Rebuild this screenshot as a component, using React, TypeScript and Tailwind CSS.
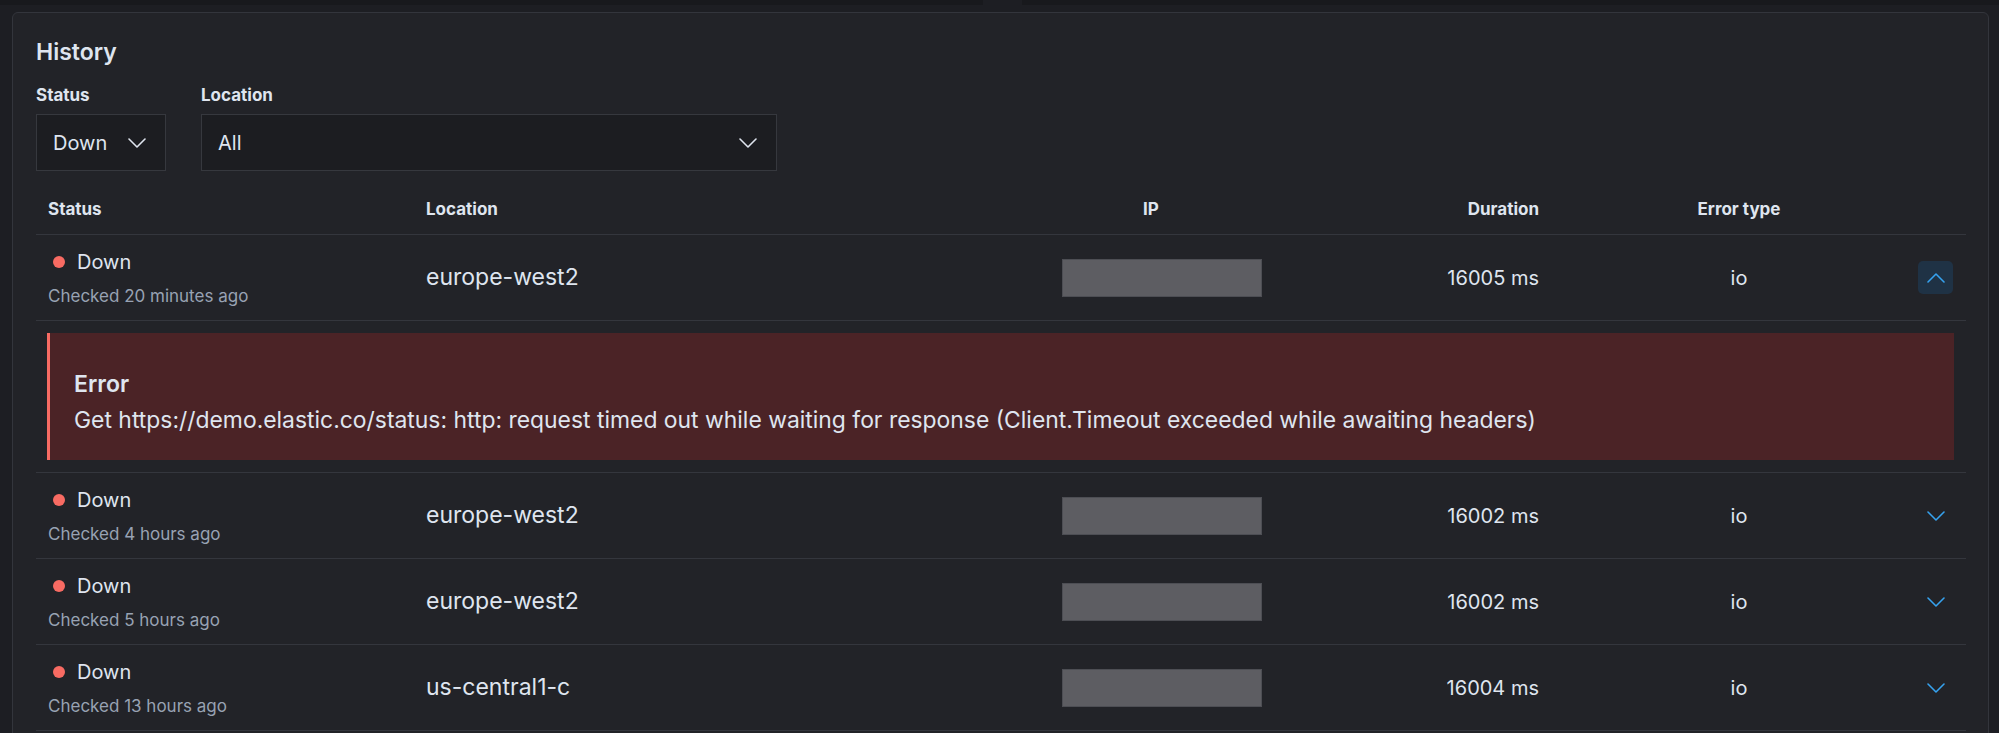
import React from "react";

type Row = {
  checked: string;
  location: string;
  duration: string;
  errorType: string;
  open?: boolean;
};

const rows: Row[] = [
  { checked: "Checked 20 minutes ago", location: "europe-west2", duration: "16005 ms", errorType: "io", open: true },
  { checked: "Checked 4 hours ago", location: "europe-west2", duration: "16002 ms", errorType: "io" },
  { checked: "Checked 5 hours ago", location: "europe-west2", duration: "16002 ms", errorType: "io" },
  { checked: "Checked 13 hours ago", location: "us-central1-c", duration: "16004 ms", errorType: "io" },
];

const cols = "grid grid-cols-[378px_586px_302px_258px_358px_47px]";

const Chevron = ({ up, color }: { up?: boolean; color: string }) => (
  <svg width="18" height="10" viewBox="0 0 18 10" fill="none">
    <path
      d={up ? "M1 9 L9 1 L17 9" : "M1 1 L9 9 L17 1"}
      stroke={color}
      strokeWidth="1.6"
      strokeLinecap="round"
      strokeLinejoin="round"
    />
  </svg>
);

const Select = ({ label, value, width }: { label: string; value: string; width: string }) => (
  <div className="flex flex-col">
    <div className="text-[17px] leading-[24px] font-bold text-[#dfe5ef]">{label}</div>
    <div className={`mt-[7px] h-[57px] ${width} flex items-center justify-between pl-[16px] pr-[19px] bg-[#1c1d21] border border-[#36383e]`}>
      <span className="text-[20px] text-[#dfe5ef]">{value}</span>
      <Chevron color="#dfe5ef" />
    </div>
  </div>
);

const HistoryRow = ({ row }: { row: Row }) => (
  <>
    <div className={`${cols} h-[86px] border-b border-[#34363d] items-center`}>
      <div className="pl-[12px] flex flex-col">
        <div className="flex items-center h-[24px]">
          <span className="w-[12px] h-[12px] rounded-full bg-[#f86b63] ml-[5px] mr-[12px]" />
          <span className="text-[20px] leading-[24px] text-[#dfe5ef]">Down</span>
        </div>
        <div className="mt-[12px] text-[17px] leading-[20px] text-[#98a2b3]">{row.checked}</div>
      </div>
      <div className="pl-[12px] text-[23px] text-[#dfe5ef]">{row.location}</div>
      <div className="pl-[62px]">
        <div className="w-[200px] h-[38px] bg-[#5d5d62] border border-[#4d4e54]" />
      </div>
      <div className="pr-[21px] text-right text-[20px] text-[#dfe5ef]">{row.duration}</div>
      <div className="text-center text-[20px] text-[#dfe5ef]">{row.errorType}</div>
      <div className="flex justify-end pr-[12px]">
        {row.open ? (
          <div className="w-[35px] h-[33px] rounded-[5px] bg-[#1f3245] flex items-center justify-center">
            <Chevron up color="#36a2ef" />
          </div>
        ) : (
          <div className="w-[35px] h-[33px] flex items-center justify-center">
            <Chevron color="#36a2ef" />
          </div>
        )}
      </div>
    </div>
    {row.open && (
      <div className="py-[12px] pl-[11px] pr-[12px] border-b border-[#34363d]">
        <div className="h-[127px] bg-[#4b2326] border-l-[3px] border-[#f86b63] pl-[24px] pt-[37px]">
          <div className="text-[23px] leading-[28px] font-semibold text-[#dfe5ef]">Error</div>
          <div className="mt-[7px] text-[22.9px] leading-[30px] text-[#dfe5ef]">
            Get https://demo.elastic.co/status: http: request timed out while waiting for response (Client.Timeout exceeded while awaiting headers)
          </div>
        </div>
      </div>
    )}
  </>
);

export default function App() {
  return (
    <div className="h-[733px] overflow-hidden bg-[#1d1e23] font-['Inter',sans-serif]">
      <div className="flex h-[5px]">
        <div className="w-[983px] bg-[#18191d]" />
        <div className="w-[39px] bg-[#1d1e23]" />
        <div className="flex-1 bg-[#18191d]" />
      </div>
      <div className="mt-[7px] ml-[12px] w-[1977px] h-[800px] border border-[#33353c] rounded-[6px] bg-[#222328] pl-[23px] pr-[22px] pt-[24px]">
        <div className="text-[23px] leading-[30px] font-semibold text-[#dfe5ef]">History</div>
        <div className="mt-[16px] flex gap-[35px]">
          <Select label="Status" value="Down" width="w-[130px]" />
          <Select label="Location" value="All" width="w-[576px]" />
        </div>
        <div className={`${cols} mt-[15px] h-[49px] border-b border-[#34363d] items-center text-[17px] font-bold text-[#dfe5ef]`}>
          <div className="pl-[12px]">Status</div>
          <div className="pl-[12px]">Location</div>
          <div className="text-center">IP</div>
          <div className="pr-[21px] text-right">Duration</div>
          <div className="text-center">Error type</div>
          <div />
        </div>
        {rows.map((r, i) => (
          <HistoryRow key={i} row={r} />
        ))}
      </div>
    </div>
  );
}
